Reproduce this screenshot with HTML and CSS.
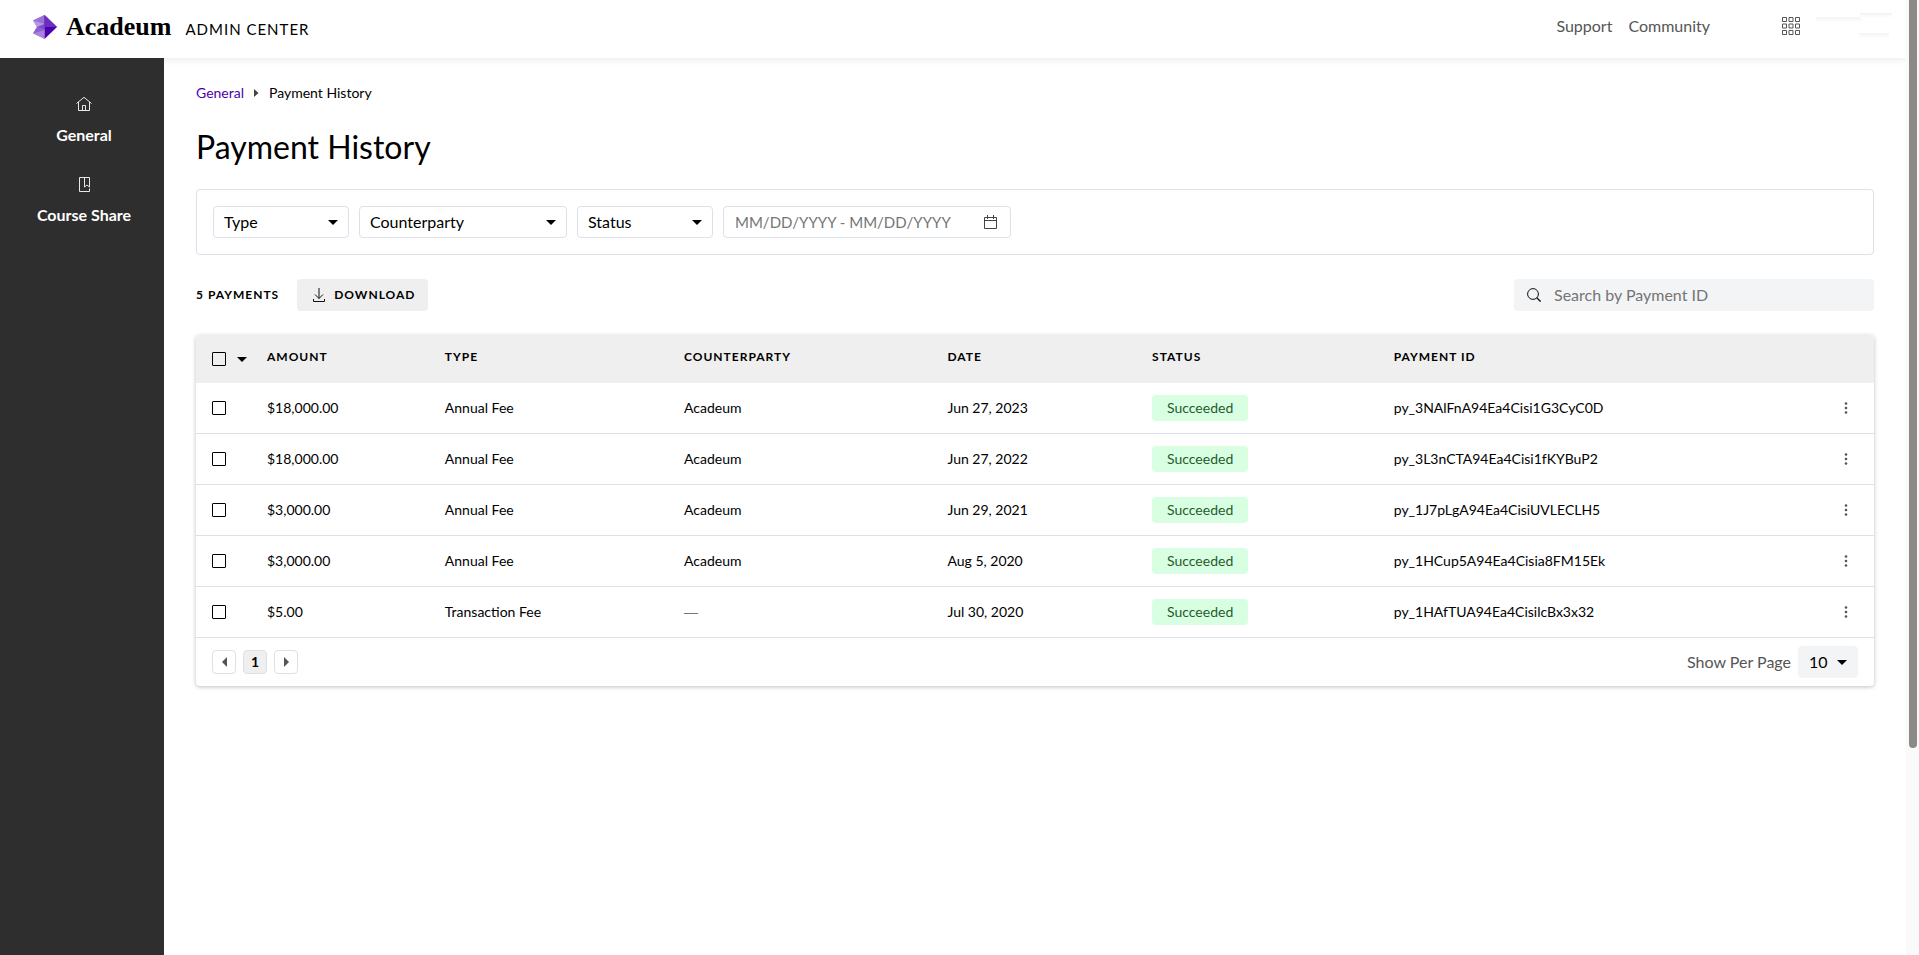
FILE: index.html
```html
<!DOCTYPE html>
<html lang="en">
<head>
<meta charset="utf-8">
<title>Payment History</title>
<link rel="stylesheet" href="styles.css">
</head>
<body>
<svg class="defs" aria-hidden="true">
  <symbol id="caret" viewBox="0 0 10 5"><path d="M0 0h10L5 5z" fill="#000"/></symbol>
  <symbol id="dots" viewBox="0 0 4 12"><g fill="#555"><circle cx="2" cy="1.5" r="1.3"/><circle cx="2" cy="6" r="1.3"/><circle cx="2" cy="10.5" r="1.3"/></g></symbol>
</svg>
<header class="topbar">
  <a class="brand" href="#">
    <svg class="brand-mark" width="24" height="24" viewBox="0 0 24 24">
      <path d="M11.500 0L0 5.500L4 12L0 18.500L11.500 24z" fill="#a883dc"/>
      <path d="M11.500 0L0 5.500L11.500 9z" fill="#9a72d4"/>
      <path d="M0 5.500L11.500 9L4 12z" fill="#b699e2"/>
      <path d="M4 12L11.500 9V15z" fill="#7f4cc9"/>
      <path d="M4 12L11.500 15L0 18.500z" fill="#8f60d0"/>
      <path d="M11.500 0L24 12L11.500 24z" fill="#4b00b0"/>
      <path d="M11.500 0L24 12H11.500z" fill="#6a2fc0"/>
    </svg>
    <span class="brand-name">Acadeum</span>
    <span class="brand-sub">ADMIN CENTER</span>
  </a>
  <nav class="top-links">
    <a href="#">Support</a>
    <a href="#">Community</a>
  </nav>
  <button class="apps" aria-label="Apps">
    <svg width="18" height="18" viewBox="0 0 18 18" fill="none" stroke="#555"><path d="M.5.500h4v4h-4zM7 .5h4v4H7zM13.500.5h4v4h-4zM.5 7h4v4h-4zM7 7h4v4H7zM13.500 7h4v4h-4zM.5 13.500h4v4h-4zM7 13.500h4v4H7zM13.500 13.500h4v4h-4z"/></svg>
  </button>
  <svg class="account" width="80" height="30" viewBox="0 0 80 30" aria-hidden="true">
    <defs><linearGradient id="fade" x1="0" y1="0" x2="0" y2="1"><stop offset="0" stop-color="#f3f3f3"/><stop offset="1" stop-color="#fff"/></linearGradient></defs>
    <path d="M0 6h46v5H0z" fill="url(#fade)"/>
    <path d="M44 2h32v5H44z" fill="url(#fade)"/>
    <path d="M43 22h30v5H43z" fill="url(#fade)"/>
  </svg>
</header>
<div class="shell">
  <nav class="sidebar">
    <a href="#">
      <svg width="16" height="16" viewBox="0 0 16 16" fill="none" stroke="#e8e8e8"><path d="M.5 7.500L8 1.300L15.500 7.500M2.500 6v8.500h11V6M6.500 14.500V9.500h3v5"/></svg>
      <span>General</span>
    </a>
    <a href="#">
      <svg width="16" height="16" viewBox="0 0 16 16" fill="none" stroke="#e8e8e8"><path d="M13.500 12.500v3h-10v-14h10v9.500l-2.500-2l-2.500 2V1.500"/></svg>
      <span>Course Share</span>
    </a>
  </nav>
  <main class="content">
    <nav class="crumbs" aria-label="Breadcrumb">
      <a href="#">General</a>
      <svg width="5" height="8" viewBox="0 0 5 8"><path d="M0 0L4.500 4L0 8z" fill="#444"/></svg>
      <span>Payment History</span>
    </nav>
    <h1>Payment History</h1>
    <form class="filters">
      <div class="pick"><select aria-label="Type"><option>Type</option></select><svg><use href="#caret"/></svg></div>
      <div class="pick pick-wide"><select aria-label="Counterparty"><option>Counterparty</option></select><svg><use href="#caret"/></svg></div>
      <div class="pick"><select aria-label="Status"><option>Status</option></select><svg><use href="#caret"/></svg></div>
      <label class="dates">
        <input type="text" aria-label="Date range" placeholder="MM/DD/YYYY - MM/DD/YYYY">
        <svg width="13" height="14" viewBox="0 0 13 14" fill="none" stroke="#444"><path d="M.5 2.500h12v11H.5zM.5 5.500h12M3.500 0v4M9.500 0v4"/></svg>
      </label>
    </form>
    <div class="tools">
      <strong class="count">5 PAYMENTS</strong>
      <button class="download">
        <svg width="12" height="14" viewBox="0 0 12 14" fill="none" stroke="#111"><path d="M6 0v10.500M2 6.500l4 4l4-4M.5 11v2.500h11V11"/></svg>
        DOWNLOAD
      </button>
      <label class="search">
        <svg width="14" height="14" viewBox="0 0 14 14" fill="none" stroke="#111"><circle cx="6" cy="6" r="5.400"/><path d="M9.800 9.800L13.600 13.600" stroke-width="1.400"/></svg>
        <input type="text" aria-label="Search payments" placeholder="Search by Payment ID">
      </label>
    </div>
    <section class="card">
      <table>
        <colgroup><col class="c-check"><col class="c-amount"><col class="c-type"><col class="c-party"><col class="c-date"><col class="c-status"><col class="c-id"><col class="c-more"></colgroup>
        <thead>
          <tr>
            <th><div class="check-all"><input type="checkbox" aria-label="Select all"><button aria-label="Selection options"><svg width="10" height="5"><use href="#caret"/></svg></button></div></th>
            <th>AMOUNT</th><th>TYPE</th><th>COUNTERPARTY</th><th>DATE</th><th>STATUS</th><th>PAYMENT ID</th><th></th>
          </tr>
        </thead>
        <tbody>
          <tr><td><input type="checkbox" aria-label="Select payment 1"></td><td>$18,000.00</td><td>Annual Fee</td><td>Acadeum</td><td>Jun 27, 2023</td><td><span class="badge">Succeeded</span></td><td>py_3NAlFnA94Ea4Cisi1G3CyC0D</td><td><button class="more" aria-label="More"><svg width="4" height="12"><use href="#dots"/></svg></button></td></tr>
          <tr><td><input type="checkbox" aria-label="Select payment 2"></td><td>$18,000.00</td><td>Annual Fee</td><td>Acadeum</td><td>Jun 27, 2022</td><td><span class="badge">Succeeded</span></td><td>py_3L3nCTA94Ea4Cisi1fKYBuP2</td><td><button class="more" aria-label="More"><svg width="4" height="12"><use href="#dots"/></svg></button></td></tr>
          <tr><td><input type="checkbox" aria-label="Select payment 3"></td><td>$3,000.00</td><td>Annual Fee</td><td>Acadeum</td><td>Jun 29, 2021</td><td><span class="badge">Succeeded</span></td><td>py_1J7pLgA94Ea4CisiUVLECLH5</td><td><button class="more" aria-label="More"><svg width="4" height="12"><use href="#dots"/></svg></button></td></tr>
          <tr><td><input type="checkbox" aria-label="Select payment 4"></td><td>$3,000.00</td><td>Annual Fee</td><td>Acadeum</td><td>Aug 5, 2020</td><td><span class="badge">Succeeded</span></td><td>py_1HCup5A94Ea4Cisia8FM15Ek</td><td><button class="more" aria-label="More"><svg width="4" height="12"><use href="#dots"/></svg></button></td></tr>
          <tr><td><input type="checkbox" aria-label="Select payment 5"></td><td>$5.00</td><td>Transaction Fee</td><td class="none">—</td><td>Jul 30, 2020</td><td><span class="badge">Succeeded</span></td><td>py_1HAfTUA94Ea4CisilcBx3x32</td><td><button class="more" aria-label="More"><svg width="4" height="12"><use href="#dots"/></svg></button></td></tr>
        </tbody>
      </table>
      <footer class="pager">
        <button aria-label="Previous page"><svg width="5" height="10" viewBox="0 0 5 10"><path d="M5 0v10L0 5z" fill="#555"/></svg></button>
        <button class="current">1</button>
        <button aria-label="Next page"><svg width="5" height="10" viewBox="0 0 5 10"><path d="M0 0v10L5 5z" fill="#555"/></svg></button>
        <label for="per-page">Show Per Page</label>
        <div class="pick pick-small"><select id="per-page"><option>10</option></select><svg><use href="#caret"/></svg></div>
      </footer>
    </section>
  </main>
</div>
<div class="scroll-track"><div class="scroll-thumb"></div></div>
</body>
</html>
```

FILE: styles.css
```css
* { box-sizing: border-box; }
body {
  margin: 0;
  padding-right: 13px;
  min-height: 100vh;
  display: flex;
  flex-direction: column;
  background: #fff;
  color: #000;
  font: 14px/20px Lato, "Open Sans", sans-serif;
}
a { color: inherit; text-decoration: none; }
svg { display: block; flex: none; }
button, input, select { font: inherit; color: inherit; margin: 0; }
button { border: 0; padding: 0; background: none; }
.defs { position: absolute; width: 0; height: 0; }

.topbar {
  position: relative;
  z-index: 0;
  height: 58px;
  padding: 0 10px 6px 33px;
  display: flex;
  align-items: center;
  background: #fff;
  box-shadow: 0 2px 8px rgba(0, 0, 0, .08);
}
.brand { display: flex; align-items: baseline; padding-top: 2px; }
.brand-mark { align-self: center; margin-right: 9px; }
.brand-name { font: bold 26px/32px "Liberation Serif", serif; margin-right: 14px; }
.brand-sub { font-size: 15px; letter-spacing: 1px; }
.top-links {
  margin-left: auto;
  display: flex;
  gap: 16px;
  color: #555;
  font-size: 16px;
}
.apps { margin: 0 16px 0 72px; }

.shell { flex: 1; display: flex; }
.sidebar {
  z-index: 1;
  width: 164px;
  flex: none;
  padding: 38px 0 0 4px;
  background: #2e2e2e;
  color: #fff;
}
.sidebar a {
  height: 80px;
  display: flex;
  flex-direction: column;
  align-items: center;
  gap: 13px;
  font-size: 16px;
  font-weight: bold;
}

.content { flex: 1; padding: 25px 32px; }
.crumbs { display: flex; align-items: center; gap: 10px; }
.crumbs a { color: #4b00b0; }
h1 { margin: 24px 0 22px; font-size: 32px; line-height: 40px; font-weight: 400; }

.filters {
  display: flex;
  gap: 10px;
  padding: 16px;
  border: 1px solid #dde0ea;
  border-radius: 4px;
  font-size: 16px;
}
.pick { display: grid; align-items: center; width: 136px; }
.pick-wide { width: 208px; }
.pick > * { grid-area: 1 / 1; }
.pick select {
  appearance: none;
  width: 100%;
  height: 32px;
  padding: 0 10px;
  border: 1px solid #dde0ea;
  border-radius: 4px;
  background: #fff;
}
.pick svg { width: 10px; height: 5px; justify-self: end; margin-right: 11px; pointer-events: none; }
.dates {
  width: 288px;
  height: 32px;
  display: flex;
  align-items: center;
  padding: 0 13px 0 11px;
  border: 1px solid #dde0ea;
  border-radius: 4px;
  font-size: 15px;
}
.dates input, .search input { flex: 1; min-width: 0; padding: 0; border: 0; background: none; }
::placeholder { color: #757575; opacity: 1; }

.tools { display: flex; align-items: center; margin: 24px 0; }
.count, .download, th { font-size: 12px; font-weight: bold; letter-spacing: 1px; }
.download {
  height: 32px;
  margin-left: 18px;
  padding: 0 12px 0 16px;
  display: flex;
  align-items: center;
  gap: 9px;
  border-radius: 4px;
  background: #efefef;
}
.search {
  width: 360px;
  height: 32px;
  margin-left: auto;
  padding: 0 13px;
  display: flex;
  align-items: center;
  gap: 13px;
  border-radius: 4px;
  background: #f3f4f6;
  font-size: 16px;
}

.card { border-radius: 4px; box-shadow: 0 1px 4px rgba(0, 0, 0, .25); overflow: hidden; }
table { width: 100%; border-collapse: separate; border-spacing: 0; table-layout: fixed; }
.c-check { width: 71px; }
.c-amount { width: 10.6%; }
.c-type { width: 14.25%; }
.c-party { width: 15.7%; }
.c-date { width: 12.2%; }
.c-status { width: 14.4%; }
.c-more { width: 36px; }
th { height: 48px; padding: 0 0 4px; text-align: left; background: #efefef; }
td { height: 51px; padding: 0; border-bottom: 1px solid #dde0ea; }
th:first-child, td:first-child { padding-left: 16px; }
input[type="checkbox"] {
  appearance: none;
  display: block;
  width: 14px;
  height: 14px;
  border: 1px solid #000;
  border-radius: 1px;
  background: #fff;
}
.check-all { display: flex; align-items: center; gap: 11px; padding-top: 4px; }
.check-all input { background: none; }
.badge {
  display: inline-block;
  width: 96px;
  padding: 3px 0;
  border-radius: 4px;
  text-align: center;
  vertical-align: middle;
  background: #d9ffe3;
  color: #1f5c2b;
}
.more { display: block; padding: 4px 6px; }
.none { color: #777; font-family: "Liberation Sans", sans-serif; }

.pager { display: flex; align-items: center; gap: 7px; padding: 8px 16px; }
.pager button {
  width: 24px;
  height: 24px;
  display: grid;
  place-items: center;
  border: 1px solid #dde0ea;
  border-radius: 4px;
}
.pager .current { background: #efefef; font-weight: bold; }
.pager label { margin-left: auto; font-size: 16px; color: #555; }
.pick-small { width: 60px; font-size: 16px; }
.pick-small select { border-color: #f3f4f6; background: #f3f4f6; }

.scroll-track { position: fixed; top: 0; right: 0; bottom: 0; width: 13px; padding-left: 3px; background: #fafafa; }
.scroll-thumb { width: 8px; height: 78.3%; border-radius: 0 0 4px 4px; background: #8b8a88; }
```
